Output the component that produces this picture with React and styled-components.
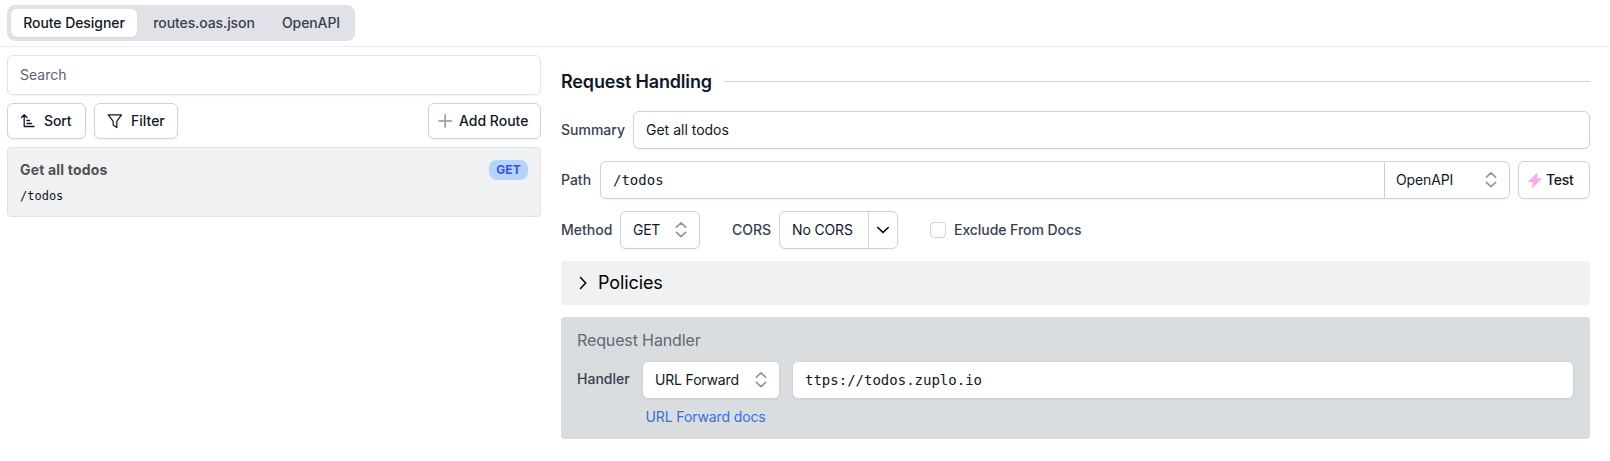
import React from "react";
import styled, { createGlobalStyle, css } from "styled-components";

const Global = createGlobalStyle`
  * { box-sizing: border-box; }
  body {
    margin: 0;
    background: #fff;
    color: #111827;
    font: 500 14px/20px Inter, "Liberation Sans", sans-serif;
    -webkit-font-smoothing: antialiased;
  }
  button, input { font: inherit; color: inherit; margin: 0; }
`;

const mono = css`font-family: "DejaVu Sans Mono", "Liberation Mono", monospace; font-weight: 400;`;
const field = css`
  border: 1px solid #d1d1db;
  border-radius: 6px;
  background: #fff;
  box-shadow: 0 1px 2px rgba(0, 0, 0, 0.05);
`;

const Text = styled.span`
  white-space: nowrap;
  letter-spacing: ${(p) => p.$ls || 0}px;
`;

const TopBar = styled.header`
  height: 47px;
  padding: 5px 7px;
  border-bottom: 1px solid #ececf0;
`;
const Tabs = styled.nav`
  display: flex;
  width: 348px;
  height: 36px;
  padding: 4px;
  border-radius: 8px;
  background: #e1e2e8;
`;
const Tab = styled.button`
  width: ${(p) => p.$w}px;
  height: 28px;
  padding: 0;
  border: 0;
  border-radius: 6px;
  background: ${(p) => (p.$active ? "#fff" : "transparent")};
  color: ${(p) => (p.$active ? "#111827" : "#374151")};
  box-shadow: ${(p) => (p.$active ? "0 1px 2px rgba(0,0,0,.06)" : "none")};
`;

const Main = styled.main`
  display: flex;
  gap: 20px;
  padding: 8px 20px 0 7px;
`;
const Sidebar = styled.aside`
  width: 534px;
  flex: none;
  display: flex;
  flex-direction: column;
  gap: 8px;
`;
const Search = styled.input`
  ${field}
  height: 40px;
  padding: 0 12px 2px;
  border-color: #e1e2e8;
  font-weight: 400;
  &::placeholder { color: #5b6272; opacity: 1; }
`;
const Actions = styled.div`
  display: flex;
  gap: 8px;
`;
const Button = styled.button`
  ${field}
  display: flex;
  align-items: center;
  gap: ${(p) => p.$gap ?? 8}px;
  width: ${(p) => p.$w}px;
  height: ${(p) => p.$h || 36}px;
  padding: 0 0 0 ${(p) => p.$pl ?? 12}px;
  margin-left: ${(p) => (p.$end ? "auto" : 0)};
  svg { flex: none; }
`;
const RouteCard = styled.article`
  height: 70px;
  padding: 12px;
  border: 1px solid #dce1ea;
  border-radius: 4px;
  background: #f0f1f3;
`;
const CardTop = styled.div`
  display: flex;
  justify-content: space-between;
  height: 20px;
  font-weight: 700;
  color: #525252;
`;
const Badge = styled.span`
  width: 39px;
  height: 20px;
  border-radius: 8px;
  background: #b5d3ff;
  color: #2f55e8;
  font-size: 12px;
  font-weight: 700;
  text-align: center;
`;
const RoutePath = styled.div`
  ${mono}
  margin-top: 6px;
  font-size: 12px;
`;

const Designer = styled.section`
  flex: 1;
  display: flex;
  flex-direction: column;
  gap: 12px;
  padding-top: 12px;
`;
const Heading = styled.h2`
  display: flex;
  align-items: center;
  gap: 12px;
  height: 29px;
  margin: 0 0 3px;
  font-size: 18px;
  line-height: 29px;
  font-weight: 600;
  &::after { content: ""; flex: 1; height: 1px; background: #d1d1db; }
`;
const Row = styled.div`
  display: flex;
  align-items: center;
  height: 38px;
`;
const Label = styled.label`
  width: ${(p) => p.$w}px;
  flex: none;
  padding-bottom: ${(p) => p.$lift || 0}px;
  color: #374151;
  white-space: nowrap;
`;
const Input = styled.input`
  ${field}
  flex: 1;
  min-width: 0;
  height: 38px;
  padding: 0 12px ${(p) => (p.$mono ? 0 : 1)}px;
  font-weight: 400;
  ${(p) => p.$mono && mono}
  ${(p) => p.$joined && "border-radius: 6px 0 0 6px;"}
`;
const Select = styled.button`
  ${field}
  display: flex;
  align-items: center;
  justify-content: space-between;
  width: ${(p) => p.$w}px;
  height: 38px;
  flex: none;
  padding: 0 12px 0 ${(p) => p.$pl ?? 12}px;
  font-weight: 400;
  margin-right: ${(p) => p.$mr || 0}px;
  ${(p) => p.$joined && "border-radius: 0 6px 6px 0; border-left: 0;"}
`;
const SplitSelect = styled.div`
  ${field}
  display: flex;
  width: 119px;
  height: 38px;
  margin-right: 32px;
  font-weight: 400;
`;
const SplitValue = styled.div`
  width: 89px;
  padding: 8px 0 0 12px;
  border-right: 1px solid #d1d1db;
`;
const SplitToggle = styled.div`
  flex: 1;
  display: grid;
  place-items: center;
`;
const Checkbox = styled.span`
  width: 16px;
  height: 16px;
  margin-right: 8px;
  border: 1px solid #d1d1db;
  border-radius: 4px;
`;
const Policies = styled.div`
  display: flex;
  align-items: center;
  gap: 7px;
  height: 44px;
  padding-left: 14px;
  border-radius: 4px;
  background: #f0f1f3;
  color: #000;
  font-size: 18px;
  font-weight: 400;
`;
const Handler = styled.section`
  height: 122px;
  padding: 11px 16px;
  border-radius: 4px;
  background: #dadde0;
`;
const HandlerTitle = styled.h3`
  margin: 0 0 9px;
  color: #636776;
  font-size: 16px;
  line-height: 24px;
  font-weight: 400;
`;
const DocsLink = styled.a`
  display: block;
  margin: 8px 0 0 68.5px;
  color: #2f6fed;
  font-weight: 400;
`;

const SortIcon = () => (
  <svg width="16" height="16" viewBox="0 0 16 16" fill="none" stroke="#111827" strokeWidth="1.3" strokeLinejoin="round" strokeLinecap="round">
    <path d="M1.5 4.5 4.2 1.8 6.9 4.5M4.2 2v11.5M4.2 13.5H14M7 7.5h2.5M7 10.5h4.5" />
  </svg>
);
const FilterIcon = () => (
  <svg width="16" height="16" viewBox="0 0 16 16" fill="none" stroke="#111827" strokeWidth="1.25" strokeLinejoin="round">
    <path d="M1.3 1.8h13.2L9.8 8.3v6.2L6.2 12V8.3z" />
  </svg>
);
const PlusIcon = () => (
  <svg width="16" height="16" viewBox="0 0 16 16" stroke="#8f94a3" strokeWidth="1.5">
    <path d="M1.5 8h13.5M8.2 1.2v13.5" />
  </svg>
);
const UpDown = () => (
  <svg width="12" height="16" viewBox="0 0 12 16" fill="none" stroke="#9095a5" strokeWidth="1.6" strokeLinecap="round" strokeLinejoin="round">
    <path d="M1.4 5.2 6 .9l4.6 4.3M1.4 10.3 6 14.6l4.6-4.3" />
  </svg>
);
const Bolt = () => (
  <svg width="14" height="15" viewBox="0 0 14 15" fill="#ffa8e8">
    <path d="M8.5.2.2 8.5a.5.5 0 0 0 .4.8h4.1l-.7 5.2a.4.4 0 0 0 .7.3l8.8-8.7a.5.5 0 0 0-.4-.8H8.9L9.2.5a.4.4 0 0 0-.7-.3z" />
  </svg>
);
const ChevronDown = () => (
  <svg width="14" height="8" viewBox="0 0 14 8" fill="none" stroke="#000" strokeWidth="1.6" strokeLinecap="round">
    <path d="m1.8 1.5 5.2 5 5.2-5" />
  </svg>
);
const ChevronRight = () => (
  <svg width="16" height="16" viewBox="0 0 16 16" fill="none" stroke="#000" strokeWidth="1.5" strokeLinecap="round">
    <path d="m5.5 2.5 5.2 5.5-5.2 5.5" />
  </svg>
);

export default function App() {
  return (
    <>
      <Global />
      <TopBar>
        <Tabs>
          <Tab $active $w={126}><Text $ls={-0.07}>Route Designer</Text></Tab>
          <Tab $w={134}><Text $ls={-0.1}>routes.oas.json</Text></Tab>
          <Tab $w={80}><Text $ls={-0.1}>OpenAPI</Text></Tab>
        </Tabs>
      </TopBar>
      <Main>
        <Sidebar>
          <Search placeholder="Search" />
          <Actions>
            <Button $w={79}><SortIcon /><Text $ls={-0.1}>Sort</Text></Button>
            <Button $w={84}><FilterIcon /><Text>Filter</Text></Button>
            <Button $w={113} $pl={8} $gap={6} $end><PlusIcon /><Text>Add Route</Text></Button>
          </Actions>
          <RouteCard>
            <CardTop><Text $ls={0.18}>Get all todos</Text><Badge>GET</Badge></CardTop>
            <RoutePath>/todos</RoutePath>
          </RouteCard>
        </Sidebar>
        <Designer>
          <Heading><Text $ls={-0.17}>Request Handling</Text></Heading>
          <Row>
            <Label $w={72}>Summary</Label>
            <Input defaultValue="Get all todos" />
          </Row>
          <Row>
            <Label $w={39}>Path</Label>
            <Input $mono $joined defaultValue="/todos" />
            <Select $joined $w={125} $pl={11} $mr={8}><Text $ls={-0.12}>OpenAPI</Text><UpDown /></Select>
            <Button $w={72} $h={38} $pl={9} $gap={4}><Bolt /><Text $ls={-0.3}>Test</Text></Button>
          </Row>
          <Row>
            <Label $w={59}>Method</Label>
            <Select $w={80} $mr={32}><Text $ls={-0.3}>GET</Text><UpDown /></Select>
            <Label $w={47}>CORS</Label>
            <SplitSelect>
              <SplitValue><Text $ls={-0.15}>No CORS</Text></SplitValue>
              <SplitToggle><ChevronDown /></SplitToggle>
            </SplitSelect>
            <Checkbox />
            <Label><Text $ls={-0.06}>Exclude From Docs</Text></Label>
          </Row>
          <Policies><ChevronRight /><Text $ls={-0.1}>Policies</Text></Policies>
          <Handler>
            <HandlerTitle><Text $ls={-0.13}>Request Handler</Text></HandlerTitle>
            <Row>
              <Label $w={65} $lift={2}>Handler</Label>
              <Select $w={138} $mr={12}><Text $ls={-0.17}>URL Forward</Text><UpDown /></Select>
              <Input $mono defaultValue="ttps://todos.zuplo.io" />
            </Row>
            <DocsLink><Text $ls={-0.12}>URL Forward docs</Text></DocsLink>
          </Handler>
        </Designer>
      </Main>
    </>
  );
}
